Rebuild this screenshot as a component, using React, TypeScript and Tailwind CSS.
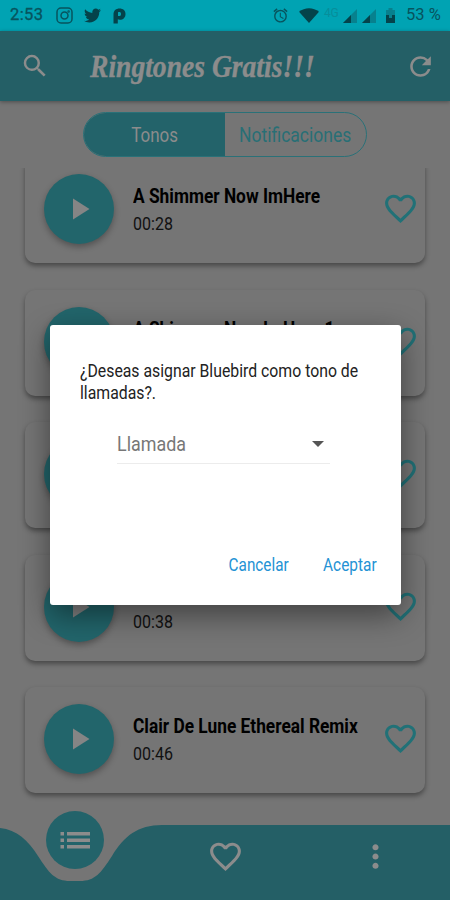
import React from 'react';
import { FaTwitter } from 'react-icons/fa';
import { MdAlarm, MdFavoriteBorder, MdMoreVert, MdPlayArrow, MdRefresh, MdSearch } from 'react-icons/md';

interface Ringtone {
  id: number;
  title: string;
  duration: string;
}

const ringtones: Ringtone[] = [
  { id: 1, title: 'A Shimmer Now ImHere', duration: '00:28' },
  { id: 2, title: 'A Shimmer Now ImHere 1', duration: '' },
  { id: 3, title: '', duration: '' },
  { id: 4, title: '', duration: '00:38' },
  { id: 5, title: 'Clair De Lune Ethereal Remix', duration: '00:46' },
];

const SignalIcon: React.FC = () => (
  <svg width="14" height="14" viewBox="0 0 14 14">
    <path d="M14 0v14H0z" fill="#07818e" />
    <path d="M8 6v8H0z" fill="#04434b" />
  </svg>
);

const StatusBar: React.FC = () => (
  <div className="flex h-[31px] shrink-0 items-center bg-[#00a3b3] pl-[10px] pr-[9px] text-[#07545e]">
    <span className="w-[46px] text-[16.5px] tracking-[0.4px] [-webkit-text-stroke:0.3px]">2:53</span>
    <svg width="17" height="17" viewBox="0 0 17 17" fill="none" stroke="currentColor" strokeWidth="1.5">
      <rect x="1" y="1" width="15" height="15" rx="4" />
      <circle cx="8.500" cy="8.500" r="3.500" />
      <circle cx="12.600" cy="4.400" r="0.500" />
    </svg>
    <FaTwitter className="ml-[11px] size-[17px] text-[#04434b]" />
    <svg className="ml-[12px]" width="13" height="16" viewBox="0 0 13 16" fill="#04434b" fillRule="evenodd">
      <path d="M0.500 6.500C0.500 2.500 3 0.500 6.500 0.500c3.700 0 6 2.100 6 5.400 0 3.500-2.300 5.800-5.700 5.800-.8 0-1.500-.2-2-.5V15.500H0.500zM5 4.200V8c1.800.4 3-.4 3-2.100S6.800 3.700 5 4.200z" />
    </svg>
    <div className="ml-auto flex items-center">
      <MdAlarm className="size-[17px]" />
      <svg className="ml-[10px]" width="20" height="15" viewBox="0 0 20 15">
        <path d="M0 3.800C5.500-1 14.500-1 20 3.800L10 15z" fill="#04434b" />
      </svg>
      <span className="mb-[6px] ml-[5px] w-[19px] text-[12px] leading-none text-[#078e9b]">4G</span>
      <SignalIcon />
      <span className="w-[5px]" />
      <SignalIcon />
      <svg className="ml-[10px]" width="9" height="15" viewBox="0 0 9 15">
        <path d="M2.500 0h4v2H9v13H0V2h2.500z" fill="#07818e" />
        <path d="M0 7h3v3h3V7h3v8H0z" fill="#04434b" />
      </svg>
      <span className="ml-[11px] text-[16.5px] tracking-[0.1px]">53 %</span>
    </div>
  </div>
);

const Header: React.FC = () => (
  <header className="relative z-10 flex h-[70px] shrink-0 items-center bg-[#245f66] text-[#8c8c8c] shadow-[0_1px_4px_rgba(0,0,0,0.35)]">
    <MdSearch className="ml-[20px] size-[30px]" />
    <h1 className="ml-[40px] w-[260px] origin-left scale-x-[0.89] whitespace-nowrap font-['Liberation_Serif',serif] text-[31px] font-bold italic leading-none [-webkit-text-stroke:0.4px]">
      Ringtones Gratis!!!
    </h1>
    <MdRefresh className="ml-auto mr-[14px] size-[31px]" />
  </header>
);

const Tabs: React.FC = () => (
  <div className="mx-auto mt-[11px] flex h-[45px] w-[284px] shrink-0 overflow-hidden rounded-full border border-[#2a7178] text-[20px]">
    <div className="flex w-1/2 items-center justify-center bg-[#23636a] text-[#8c8c8c]">
      <span className="scale-x-[0.85]">Tonos</span>
    </div>
    <div className="flex w-1/2 items-center justify-center text-[#286f75]">
      <span className="scale-x-[0.875]">Notificaciones</span>
    </div>
  </div>
);

const RingtoneCard: React.FC<{ ringtone: Ringtone }> = ({ ringtone }) => (
  <div className="flex h-[106px] shrink-0 items-center rounded-[10px] bg-[#757575] pl-[19px] pr-[6px] shadow-[0_3px_5px_rgba(0,0,0,0.38)]">
    <div className="mb-[2px] flex size-[70px] shrink-0 items-center justify-center rounded-full bg-[#22656b] shadow-[0_3px_6px_rgba(0,0,0,0.3)]">
      <MdPlayArrow className="size-[36px] text-[#858585]" />
    </div>
    <div className="ml-[19px] min-w-0 flex-1 whitespace-nowrap text-black">
      <p className="h-[27px] origin-left scale-x-[0.866] text-[20px] font-bold leading-[27px]">{ringtone.title}</p>
      <p className="h-[27px] origin-left scale-x-[0.89] text-[18px] leading-[27px] text-[#111]">{ringtone.duration}</p>
    </div>
    <MdFavoriteBorder className="mb-[3px] size-[37px] shrink-0 text-[#217177]" />
  </div>
);

const BottomNav: React.FC = () => (
  <nav className="relative z-10 h-[90px] shrink-0">
    <svg className="absolute inset-0" width="450" height="90" viewBox="0 0 450 90">
      <path d="M0 18C17 20 28 30 38 46C49 63 55 71 70 71H80C95 71 101 63 112 46C124 26 138 15 162 15H450V90H0z" fill="#245f66" />
    </svg>
    <div className="relative grid h-full grid-cols-3 text-[#8c8c8c]">
      <div className="flex justify-center">
        <div className="mt-[1px] flex size-[58px] items-center justify-center rounded-full bg-[#23636a]">
          <svg width="30" height="17" viewBox="0 0 30 17" fill="currentColor">
            <path d="M0.500 0h3.500v3.500H0.500zM7 0h23v3.500H7zM0.500 6.500h3.500v3.500H0.500zM7 6.500h23v3.500H7zM0.500 13h3.500v3.500H0.500zM7 13h23v3.500H7z" />
          </svg>
        </div>
      </div>
      <MdFavoriteBorder className="mx-auto mt-[28px] size-[37px]" />
      <MdMoreVert className="mx-auto mt-[28px] size-[37px]" />
    </div>
  </nav>
);

const AssignDialog: React.FC = () => (
  <div className="absolute left-[50px] top-[325px] z-20 flex h-[280px] w-[351px] flex-col rounded-[3px] bg-white pl-[30px] shadow-[0_10px_30px_rgba(0,0,0,0.45)]">
    <p className="mt-[35px] w-[330px] origin-left scale-x-[0.878] text-[18px] leading-[22px] text-[#222]">
      ¿Deseas asignar Bluebird como tono de
      <br />
      llamadas?.
    </p>
    <div className="ml-[37px] mt-[20px] flex h-[40px] w-[213px] items-center justify-between border-b border-[#ececec] text-[#777]">
      <span className="origin-left scale-x-[0.895] text-[20px]">Llamada</span>
      <svg className="mr-[6px]" width="12" height="6" viewBox="0 0 12 6">
        <path d="M0 0h12L6 6z" fill="#555" />
      </svg>
    </div>
    <div className="mb-[25px] mr-[24px] mt-auto flex justify-end text-[18px] leading-[30px] text-[#2492d4]">
      <button className="mr-[26px] origin-right scale-x-[0.85]">Cancelar</button>
      <button className="origin-right scale-x-[0.855]">Aceptar</button>
    </div>
  </div>
);

export default function App() {
  return (
    <div className="relative flex h-[900px] w-[450px] flex-col overflow-hidden bg-[#757575] font-[Roboto,sans-serif]">
      <StatusBar />
      <Header />
      <Tabs />
      <main className="-mb-4 mt-[11px] flex min-h-0 flex-1 flex-col overflow-hidden px-[25px]">
        <div className="-mt-[11px] flex flex-col gap-[26.5px]">
          {ringtones.map((ringtone) => (
            <RingtoneCard key={ringtone.id} ringtone={ringtone} />
          ))}
        </div>
      </main>
      <BottomNav />
      <AssignDialog />
    </div>
  );
}
